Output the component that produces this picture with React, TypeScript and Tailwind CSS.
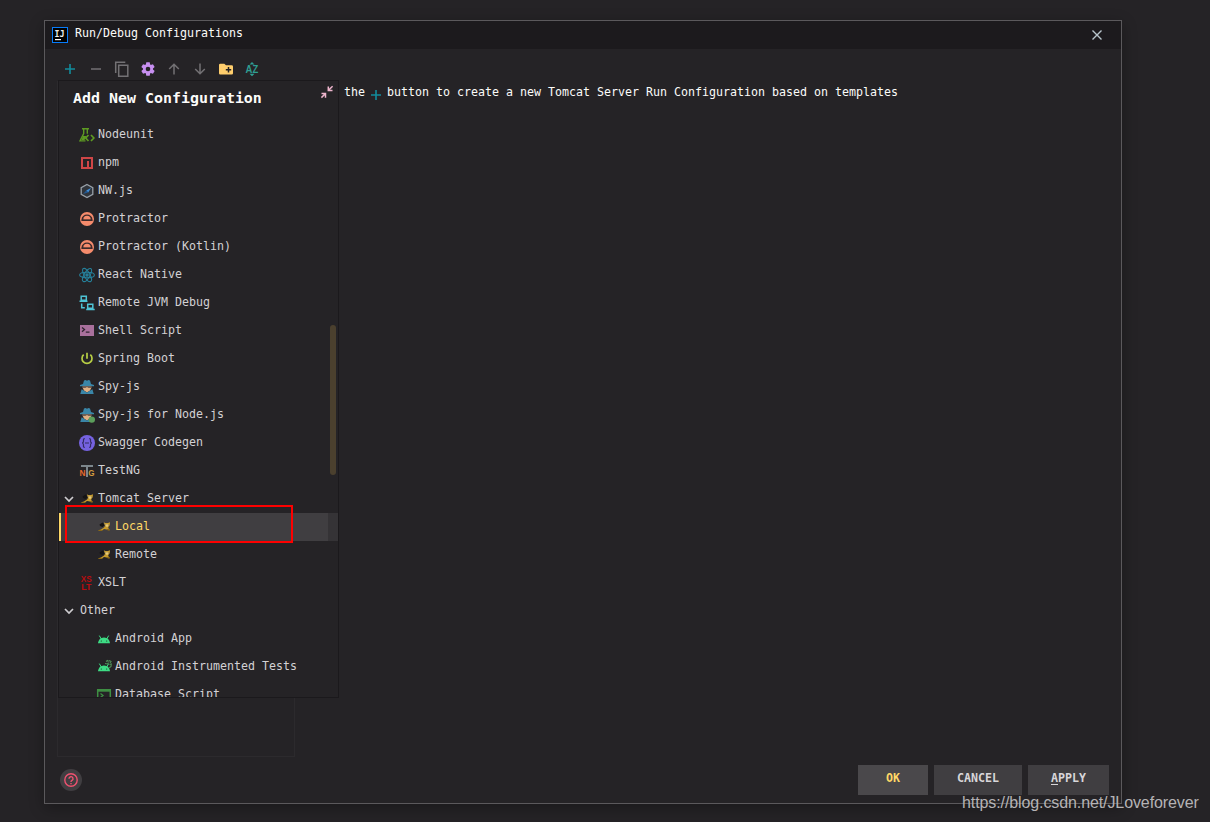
import React from 'react';

interface ConfigItem {
    label: string;
    icon?: string;
    child?: boolean;
    expanded?: boolean;
    selected?: boolean;
}

const ITEMS: ConfigItem[] = [
    { label: 'Nodeunit', icon: 'nodeunit' },
    { label: 'npm', icon: 'npm' },
    { label: 'NW.js', icon: 'nwjs' },
    { label: 'Protractor', icon: 'protractor' },
    { label: 'Protractor (Kotlin)', icon: 'protractor' },
    { label: 'React Native', icon: 'react' },
    { label: 'Remote JVM Debug', icon: 'remote' },
    { label: 'Shell Script', icon: 'shell' },
    { label: 'Spring Boot', icon: 'spring' },
    { label: 'Spy-js', icon: 'spy' },
    { label: 'Spy-js for Node.js', icon: 'spynode' },
    { label: 'Swagger Codegen', icon: 'swagger' },
    { label: 'TestNG', icon: 'testng' },
    { label: 'Tomcat Server', icon: 'tomcat', expanded: true },
    { label: 'Local', icon: 'tomcat', child: true, selected: true },
    { label: 'Remote', icon: 'tomcat', child: true },
    { label: 'XSLT', icon: 'xslt' },
    { label: 'Other', expanded: true },
    { label: 'Android App', icon: 'android', child: true },
    { label: 'Android Instrumented Tests', icon: 'androidtest', child: true },
    { label: 'Database Script', icon: 'database', child: true },
];

const spy = (
    <>
        <path d="M4 5 5 1.500 6.600 1l1.400.7L9.400 1l1.600.5L12 5l3 1v1.200H1V6z" fill="#3a86a8" />
        <path d="M3.500 7h9v1.600L11 11.500l-3 2-3-2-1.500-2.900z" fill="#e0b084" />
        <path d="M3 7.200h10v1.500h-3.500L8 8l-1.500.7H3z" fill="#4b4546" />
        <path d="M1.300 15 2.600 10.300 8 13.600l5.400-3.300L14.700 15z" fill="#3a86a8" />
    </>
);

const android = (
    <>
        <path d="M2 12.300c.2-2.900 2.200-5.800 6-5.800s5.800 2.900 6 5.800z" fill="#3ddc84" />
        <path d="M3.300 4.600 5.300 8M12.700 4.600 10.700 8" stroke="#3ddc84" />
        <circle cx="5.300" cy="10" r=".6" fill="#252326" />
        <circle cx="10.700" cy="10" r=".6" fill="#252326" />
    </>
);

const ICONS: Record<string, React.ReactNode> = {
    nodeunit: (
        <g fill="none" stroke="#5d9a22" strokeWidth="1.400">
            <path d="M3 1.700h7M4.700 1.700V6.500L1 13.900h5.500M8.300 1.700v5" />
            <path d="M4 9h3.300L5.500 13H2.500z" fill="#5d9a22" stroke="none" />
            <path d="m9.500 8-2.800 3 2.800 3M12 8l2.900 3-2.900 3" strokeWidth="1.700" />
        </g>
    ),
    npm: (
        <>
            <path d="M3 3h10v10H3z" fill="none" stroke="#cf4647" strokeWidth="2" />
            <path d="M8 6h2v6H8z" fill="#cf4647" />
        </>
    ),
    nwjs: (
        <>
            <path d="m8 1.500 5.800 3.200v6.600L8 14.500l-5.800-3.200V4.700z" fill="#30343b" stroke="#98a0a8" strokeWidth="1.300" />
            <path d="m12 5-2.800 4.500-2-2z" fill="#3b8ede" />
            <path d="m4 11 3.200-3.500 2 2z" fill="#23588f" />
        </>
    ),
    protractor: (
        <>
            <circle cx="8" cy="8" r="7" fill="#f58b6c" />
            <path d="M2.500 8.500a5.500 5 0 0 1 11 0V10h-11z" fill="#3b2a2b" />
            <path d="M4.300 8.500a3.700 3.700 0 0 1 7.400 0z" fill="#f58b6c" />
            <path d="M2.700 9.200h10.600" stroke="#3b2a2b" />
        </>
    ),
    react: (
        <g fill="none" stroke="#267f99" strokeWidth="1.100">
            <ellipse cx="8" cy="8" rx="7.400" ry="2.800" />
            <ellipse cx="8" cy="8" rx="7.400" ry="2.800" transform="rotate(60 8 8)" />
            <ellipse cx="8" cy="8" rx="7.400" ry="2.800" transform="rotate(120 8 8)" />
            <circle cx="8" cy="8" r="1.200" fill="#267f99" />
        </g>
    ),
    remote: (
        <g fill="none" stroke="#4ec3d5" strokeWidth="1.500">
            <path d="M2.200 1.200h5.100v4H2.200zM.5 6.300h8" />
            <path d="M8.700 9.200h5.100v4H8.700zM7.200 14.500h8.500M2.700 8.500v4.300h3.100" />
        </g>
    ),
    shell: (
        <>
            <path d="M1 2h14v11H1z" fill="#a9709c" />
            <path d="m3 4.500 2.500 2L3 8.700M6.800 9.200h3.700" fill="none" stroke="#302530" strokeWidth="1.300" />
        </>
    ),
    spring: (
        <path d="M4.700 3.700a5 5 0 1 0 6.600 0M8 1.700v6" fill="none" stroke="#b8cf45" strokeWidth="1.700" />
    ),
    spy,
    spynode: (
        <>
            {spy}
            <circle cx="12.800" cy="12.600" r="3.200" fill="#5c9e5b" />
        </>
    ),
    swagger: (
        <>
            <circle cx="8" cy="8" r="8" fill="#7562e0" />
            <path d="M5.800 3.700C4 3.700 4.500 5 4.500 6S4.300 8 3 8c1.300 0 1.500 1 1.500 2s-.5 2.300 1.300 2.300M10.200 3.700c1.800 0 1.300 1.300 1.300 2.300s.2 2 1.500 2c-1.300 0-1.500 1-1.500 2s.5 2.300-1.300 2.300M6 8h4" fill="none" stroke="#332c62" strokeWidth="1.200" />
        </>
    ),
    testng: (
        <>
            <path d="M2 2h12v2H9v10H7V4H2z" fill="#7c868c" />
            <text x=".5" y="12.500" className="font-['Liberation_Sans'] text-[9px] font-bold" fill="#e56a2c" textLength="6" lengthAdjust="spacingAndGlyphs">N</text>
            <text x="9.200" y="12.500" className="font-['Liberation_Sans'] text-[9px] font-bold" fill="#d29b3f" textLength="6.300" lengthAdjust="spacingAndGlyphs">G</text>
        </>
    ),
    tomcat: (
        <>
            <path d="M3.500 5.500 6.500 3.500 9 6 6.500 8 4 7z" fill="#151415" />
            <path d="M8 3.300 9.300 4H12l2-.7-.3 3-1.500 2 1 3-2.500-.7L8 10l-2.500 1.700H3L8 8.500l1-1.500z" fill="#c69b2c" />
            <path d="m8.500 4.500 1.500.7h2l1-.5-.5 2L11 8 9.300 6.500z" fill="#f0d384" />
            <path d="M1.800 11.300 5 10.500 7 12H3zM10.500 10h3.300v1.500h-2z" fill="#8c6915" />
            <path d="M9.400 5.400h.8v.8h-.8zM11.800 5.400h.8v.8h-.8z" fill="#3b301b" />
        </>
    ),
    xslt: (
        <g className="font-['Liberation_Sans'] text-[9px] font-bold" fill="#b80c0f">
            <text x="1.800" y="7.200" textLength="11" lengthAdjust="spacingAndGlyphs">XS</text>
            <text x="2.300" y="15.200" textLength="10" lengthAdjust="spacingAndGlyphs">LT</text>
        </g>
    ),
    android,
    androidtest: (
        <>
            {android}
            <path d="m10 2.500 1.500-1 1 1M13 1.500l2 1-1 1.500M13.500 5.500 15.300 5l-.3 2.500-2 1.500M9 4.500l2.500.5 1-1.500" fill="none" stroke="#4f8f58" strokeWidth="1.100" />
        </>
    ),
    database: (
        <>
            <path d="M1.700 3h12.600v10H1.700z" fill="none" stroke="#3e8f43" strokeWidth="1.500" />
            <path d="M1 2h14v2.700H1z" fill="#3e8f43" />
            <path d="M4.500 6.500 7 8.500l-2.500 2" fill="none" stroke="#3e8f43" strokeWidth="1.300" />
        </>
    ),
};

const Plus = ({ className = '' }: { className?: string }) => (
    <svg viewBox="0 0 16 16" className={`h-4 w-4 shrink-0 ${className}`} fill="none" stroke="#128c9c" strokeWidth="1.600">
        <path d="M8 3v10M3 8h10" />
    </svg>
);

const ToolIcon = ({ children }: { children: React.ReactNode }) => (
    <svg viewBox="0 0 16 16" className="h-4 w-4 shrink-0" fill="none" stroke="#737174" strokeWidth="1.500">
        {children}
    </svg>
);

const Toolbar = () => (
    <div className="flex h-8 items-center gap-2.5 pt-2 pl-[17px]">
        <Plus />
        <ToolIcon><path d="M3 8h10" /></ToolIcon>
        <ToolIcon>
            <path d="M4.700 4.200h9.100v11H4.700z" />
            <path d="M1.700 12V1.200h9.600" />
        </ToolIcon>
        <ToolIcon>
            <g fill="#c78ff0" stroke="none">
                <circle cx="8" cy="8" r="5" />
                <path d="M6.300 1.300h3.400l.6 3.200H5.700zM6.300 14.700h3.400l.6-3.200H5.700z" />
                <path d="M6.300 1.300h3.400l.6 3.200H5.700zM6.300 14.700h3.400l.6-3.200H5.700z" transform="rotate(60 8 8)" />
                <path d="M6.300 1.300h3.400l.6 3.200H5.700zM6.300 14.700h3.400l.6-3.200H5.700z" transform="rotate(120 8 8)" />
            </g>
            <circle cx="8" cy="8" r="2.300" fill="#252326" stroke="none" />
        </ToolIcon>
        <ToolIcon><path d="M8 13.500v-10M3.200 8 8 3.200 12.800 8" /></ToolIcon>
        <ToolIcon><path d="M8 2.500v10M3.200 8 8 12.800 12.800 8" /></ToolIcon>
        <ToolIcon>
            <path d="M1 4a1.300 1.300 0 0 1 1.300-1.300h4L8 4.300h5.700A1.300 1.300 0 0 1 15 5.600v6.700a1.300 1.300 0 0 1-1.300 1.300H2.300A1.300 1.300 0 0 1 1 12.300z" fill="#ffce6d" stroke="none" />
            <path d="M10.500 6v5.400M7.800 8.700h5.400" stroke="#252326" />
        </ToolIcon>
        <ToolIcon>
            <g fill="#2f9e92" stroke="none">
                <path d="m8 1 2.500 2.500h-5zM8 15.200l2.500-2.500h-5z" />
                <text x="1.600" y="11.700" className="font-['Liberation_Sans'] text-[10.500px] font-bold" textLength="12.600" lengthAdjust="spacingAndGlyphs">AZ</text>
            </g>
        </ToolIcon>
    </div>
);

const Chevron = () => (
    <svg viewBox="0 0 10 10" className="h-2.5 w-2.5 shrink-0" fill="none" stroke="#cfcdd0" strokeWidth="1.700">
        <path d="m1 3 4 4 4-4" />
    </svg>
);

const ConfigRow = ({ item }: { item: ConfigItem }) => (
    <div className={`flex h-7 shrink-0 items-center border-l-2 ${item.selected ? 'border-[#ffd866] bg-[#403e41] text-[#ffd866]' : 'border-transparent text-[#d3d1d4]'}`}>
        <div className={`flex shrink-0 items-center pl-[3px] ${item.child ? 'w-[35px]' : item.icon ? 'w-[18px]' : 'w-[19px]'}`}>
            {item.expanded && <Chevron />}
        </div>
        {item.icon && (
            <svg viewBox="0 0 16 16" className="mr-[3px] h-4 w-4 shrink-0">{ICONS[item.icon]}</svg>
        )}
        <span className="-mt-0.5 whitespace-pre">{item.label}</span>
    </div>
);

const NewConfigurationPopup = () => (
    <div className="absolute top-[59px] left-[13px] flex h-[618px] w-[281px] flex-col overflow-hidden border border-[#1b191c] bg-[#252326]">
        <div className="flex h-10 shrink-0 items-start justify-between pt-[7px] pr-1 pl-3.5">
            <h2 className="text-[14.950px] leading-5 font-bold text-[#fcfcfa]">Add New Configuration</h2>
            <svg viewBox="0 0 14 14" className="-mt-[3px] h-3.5 w-3.5" fill="none" stroke="#eeb5cd" strokeWidth="1.500">
                <path d="M12.600 1.200 9 4.800M8.300 1.500v4h4.200M1.400 12.600 5 9M1.500 8.500h4v4.200" />
            </svg>
        </div>
        {ITEMS.map((item) => <ConfigRow key={item.label} item={item} />)}
        <div className="absolute top-[244px] right-0.5 h-[150px] w-1.5 rounded-[3px] bg-[#4b402e]" />
        <div className="absolute top-[432px] right-0 h-7 w-2.5 bg-[#353336]" />
    </div>
);

const App: React.FC = () => {
    return (
        <div className="relative h-[822px] w-[1210px] overflow-hidden bg-[#252326] px-11 pt-5 font-['DejaVu_Sans_Mono',monospace] text-[11.630px] leading-4">
            <div className="relative flex h-[784px] w-[1078px] flex-col border border-[#5b595c] bg-[#252326] shadow-[0_4px_14px_rgba(0,0,0,0.3)]">
                <header className="flex h-7 shrink-0 items-center bg-[#1c1a1d] pr-[18px] pl-[7px]">
                    <div className="h-4 w-4 border border-[#087cfa] bg-black">
                        <svg viewBox="0 0 14 14" className="h-3.5 w-3.5">
                            <text x="1.500" y="8.500" className="font-['DejaVu_Sans_Mono'] text-[8.500px] font-bold" fill="#eee" textLength="10" lengthAdjust="spacingAndGlyphs">IJ</text>
                            <path d="M2 11h6v1.200H2z" fill="#fff" />
                        </svg>
                    </div>
                    <span className="-mt-1 ml-[7px] flex-1 text-[#fcfcfa]">Run/Debug Configurations</span>
                    <svg viewBox="0 0 12 12" className="h-3 w-3" fill="none" stroke="#b8c5cc" strokeWidth="1.400">
                        <path d="m1.500 1.500 9 9M10.500 1.500l-9 9" />
                    </svg>
                </header>

                <Toolbar />

                <main className="flex h-[676px] shrink-0 pl-3">
                    <div className="w-[238px] border border-[#2c2a2d]" />
                    <p className="flex h-6 items-center pl-[49px] text-[#fcfcfa]">
                        <span className="-mt-0.5">the</span>
                        <Plus className="mx-[3px] mt-1" />
                        <span className="-mt-0.5">button to create a new Tomcat Server Run Configuration based on templates</span>
                    </p>
                </main>

                <footer className="flex items-start gap-1.5 pt-2 pr-3 pl-[15px]">
                    <div className="mt-1 mr-auto flex h-[22px] w-[22px] items-center justify-center rounded-full bg-[#403e41]">
                        <svg viewBox="0 0 14 14" className="h-3.5 w-3.5" fill="none" stroke="#ee5270" strokeWidth="1.400">
                            <circle cx="7" cy="7" r="6.200" />
                            <path d="M5 5.700a2 2 0 1 1 3 1.700C7.300 7.900 7 8 7 8.900M7 10v1.300" />
                        </svg>
                    </div>
                    <button className="h-[30px] w-[70px] bg-[#4a484b] pb-1 font-bold text-[#ffd866]">OK</button>
                    <button className="h-[30px] w-[88px] bg-[#403e41] pb-1 font-bold text-[#d8d6d9]">CANCEL</button>
                    <button className="h-[30px] w-[81px] bg-[#403e41] pb-1 font-bold text-[#d8d6d9]"><span className="underline underline-offset-2">A</span>PPLY</button>
                </footer>

                <NewConfigurationPopup />
            </div>

            {/* highlight around the Local entry */}
            <div className="absolute top-[505px] left-[65px] h-[38px] w-[228px] border-2 border-[#fe0000]" />
            <div className="absolute top-[794px] left-[962px] font-['Liberation_Sans',sans-serif] text-[16px] leading-[18px] tracking-[-0.100px] whitespace-nowrap text-[#b5b3b5]">https://blog.csdn.net/JLoveforever</div>
        </div>
    );
};

export default App;
